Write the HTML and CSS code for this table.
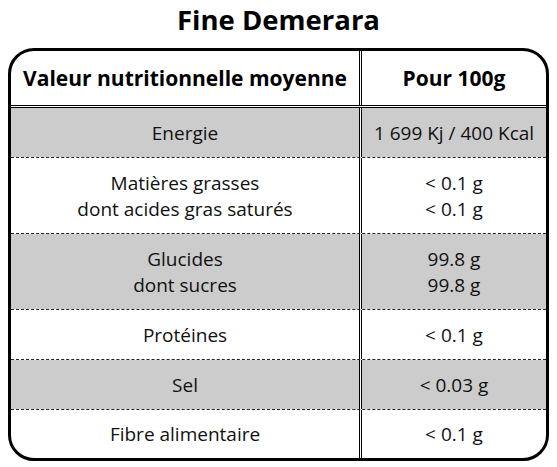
FILE: index.html
```html
<!DOCTYPE html>
<html lang="fr">
<head>
<meta charset="utf-8">
<title>Fine Demerara</title>
<link rel="stylesheet" href="styles.css">
</head>
<body>
<h1 class="title">Fine Demerara</h1>
<div class="panel">
  <div class="row head">
    <div class="cell name">Valeur nutritionnelle moyenne</div>
    <div class="cell val">Pour 100g</div>
  </div>
  <div class="row gray">
    <div class="cell name">Energie</div>
    <div class="cell val">1 699 Kj / 400 Kcal</div>
  </div>
  <div class="row tall">
    <div class="cell name">Matières grasses<br>dont acides gras saturés</div>
    <div class="cell val">&lt; 0.1 g<br>&lt; 0.1 g</div>
  </div>
  <div class="row gray tall">
    <div class="cell name">Glucides<br>dont sucres</div>
    <div class="cell val">99.8 g<br>99.8 g</div>
  </div>
  <div class="row">
    <div class="cell name">Protéines</div>
    <div class="cell val">&lt; 0.1 g</div>
  </div>
  <div class="row gray">
    <div class="cell name">Sel</div>
    <div class="cell val">&lt; 0.03 g</div>
  </div>
  <div class="row last">
    <div class="cell name">Fibre alimentaire</div>
    <div class="cell val">&lt; 0.1 g</div>
  </div>
</div>
</body>
</html>
```
FILE: styles.css
```css
html, body {
  margin: 0;
  padding: 0;
  background: #ffffff;
}
body {
  font-family: "Open Sans", "Noto Sans", sans-serif;
  color: #111111;
}
.title {
  margin: 0;
  height: 48px;
  font-size: 27.5px;
  line-height: 40px;
  font-weight: 700;
  text-align: center;
  color: #000000;
}
.panel {
  margin-left: 8px;
  width: 541px;
  box-sizing: border-box;
  border: 3px solid #000000;
  border-radius: 26px;
  overflow: hidden;
}
.row {
  display: grid;
  grid-template-columns: 348px 1fr;
  height: 49px;
  border-bottom: 1px dashed #222222;
  font-size: 19px;
  line-height: 26px;
}
.row.tall {
  height: 75px;
}
.row.last {
  height: 48px;
  border-bottom: none;
}
.row.head {
  height: 54px;
  border-bottom: 3px double #000000;
  font-size: 21px;
  font-weight: 700;
  color: #000000;
}
.row.gray .cell {
  background: #cccccc;
  background-clip: padding-box;
}
.cell {
  display: flex;
  align-items: center;
  justify-content: center;
  text-align: center;
}
.cell.val {
  border-left: 3px double #000000;
}
```
